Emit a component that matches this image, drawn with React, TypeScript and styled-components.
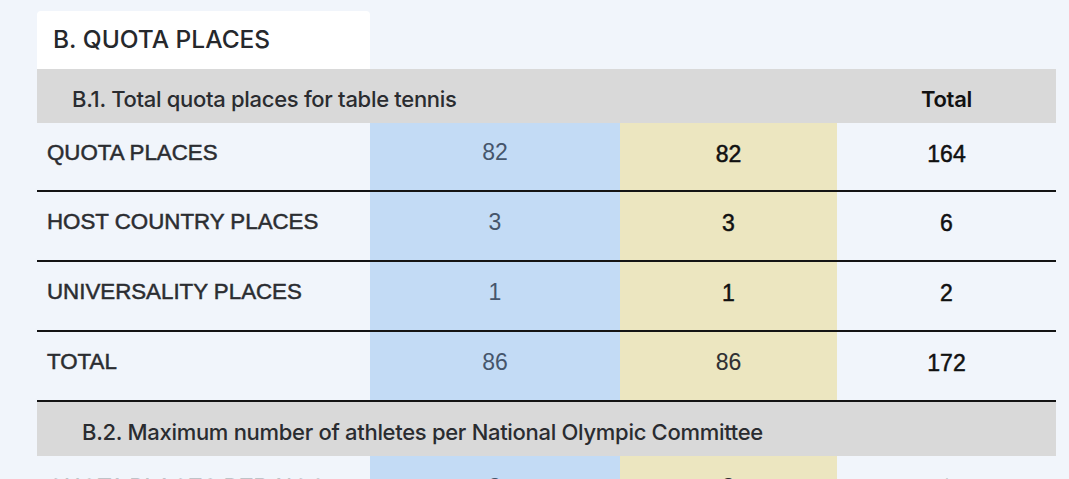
import React from "react";
import styled, { createGlobalStyle } from "styled-components";

const GlobalStyle = createGlobalStyle`
  html, body {
    margin: 0;
    padding: 0;
    background: #f1f5fb;
  }
  body {
    font-family: Inter, "Liberation Sans", sans-serif;
    color: #2a2c30;
    overflow: hidden;
  }
`

const Page = styled.div`
  width: 1069px;
  height: 479px;
  padding: 11px 0 0 37px;
  box-sizing: border-box;
`

const Section = styled.div`
  width: 1019px;
  display: flex;
  flex-direction: column;
`

const TitleCard = styled.div`
  width: 333px;
  height: 58px;
  box-sizing: border-box;
  background: #ffffff;
  border-radius: 4px 4px 0 0;
  display: flex;
  align-items: center;
  padding: 0 0 2px 16px;
  font-size: 24.5px;
  font-weight: 500;
  color: #26282c;
`

const HeaderRow = styled.div<{ $indent: number }>`
  height: 54px;
  box-sizing: border-box;
  background: #d9d9d9;
  display: flex;
  align-items: center;
  padding: 5px 0 0 ${p => p.$indent}px;
  font-size: 22px;
  font-weight: 500;
  letter-spacing: -0.3px;
  color: #2a2c30;
`

const HeaderTitle = styled.div`
  flex: 1;
`

const HeaderTotal = styled.div`
  width: 219px;
  text-align: center;
  font-weight: 600;
  color: #111;
`

const Table = styled.div`
  display: grid;
  grid-template-columns: 333px 250px 217px 219px;
`

const tones: Record<string, string> = {
  plain: "transparent",
  blue: "#c3dbf5",
  yellow: "#ece6c0",
}

const Cell = styled.div<{ $tone: string; $line: boolean; $h: number }>`
  height: ${p => p.$h}px;
  box-sizing: border-box;
  background: ${p => tones[p.$tone]};
  border-bottom: ${p => (p.$line ? "2px solid #141414" : "none")};
  display: flex;
  align-items: center;
  padding-bottom: 8px;
`

const Label = styled.span`
  padding-left: 10px;
  font-family: "Liberation Sans", Arial, sans-serif;
  font-size: 22.3px;
  font-weight: 500;
  color: #2b2d31;
  -webkit-text-stroke: 0.5px #2b2d31;
`

const Num = styled.span<{ $kind: "soft" | "strong" | "plain" }>`
  width: 100%;
  text-align: center;
  font-family: "Liberation Sans", Arial, sans-serif;
  font-size: 23px;
  color: ${p => (p.$kind === "soft" ? "#45556b" : p.$kind === "strong" ? "#111" : "#2f3033")};
  font-weight: 400;
  -webkit-text-stroke: ${p => (p.$kind === "soft" ? "0" : p.$kind === "strong" ? "0.5px #111" : "0.1px #2f3033")};
  padding-top: ${p => (p.$kind === "strong" ? "3px" : "0")};
`

type Row = {
  label: string;
  men: string;
  women: string;
  total: string;
  womenKind: "strong" | "plain";
};

const rows: Row[] = [
  { label: "QUOTA PLACES", men: "82", women: "82", total: "164", womenKind: "strong" },
  { label: "HOST COUNTRY PLACES", men: "3", women: "3", total: "6", womenKind: "strong" },
  { label: "UNIVERSALITY PLACES", men: "1", women: "1", total: "2", womenKind: "strong" },
  { label: "TOTAL", men: "86", women: "86", total: "172", womenKind: "plain" },
]

const TableRow = ({ row, h, line }: { row: Row; h: number; line: boolean }) => (
  <>
    <Cell $tone="plain" $line={line} $h={h}><Label>{row.label}</Label></Cell>
    <Cell $tone="blue" $line={line} $h={h}><Num $kind="soft">{row.men}</Num></Cell>
    <Cell $tone="yellow" $line={line} $h={h}><Num $kind={row.womenKind}>{row.women}</Num></Cell>
    <Cell $tone="plain" $line={line} $h={h}><Num $kind="strong">{row.total}</Num></Cell>
  </>
)

const App = () => {
  return (
    <>
      <GlobalStyle/>
      <Page>
        <Section>
          <TitleCard>B. QUOTA PLACES</TitleCard>
          <HeaderRow $indent={35}>
            <HeaderTitle>B.1. Total quota places for table tennis</HeaderTitle>
            <HeaderTotal>Total</HeaderTotal>
          </HeaderRow>
          <Table>
            {rows.map((r, i) => (
              <TableRow key={r.label} row={r} h={i === 0 ? 69 : 70} line={true}/>
            ))}
          </Table>
          <HeaderRow $indent={45}>
            <HeaderTitle>B.2. Maximum number of athletes per National Olympic Committee</HeaderTitle>
          </HeaderRow>
          <Table>
            <TableRow
              row={{ label: "QUOTA PLACES PER NOC", men: "3", women: "3", total: "6", womenKind: "plain" }}
              h={70}
              line={false}
            />
          </Table>
        </Section>
      </Page>
    </>
  )
}

export default App
